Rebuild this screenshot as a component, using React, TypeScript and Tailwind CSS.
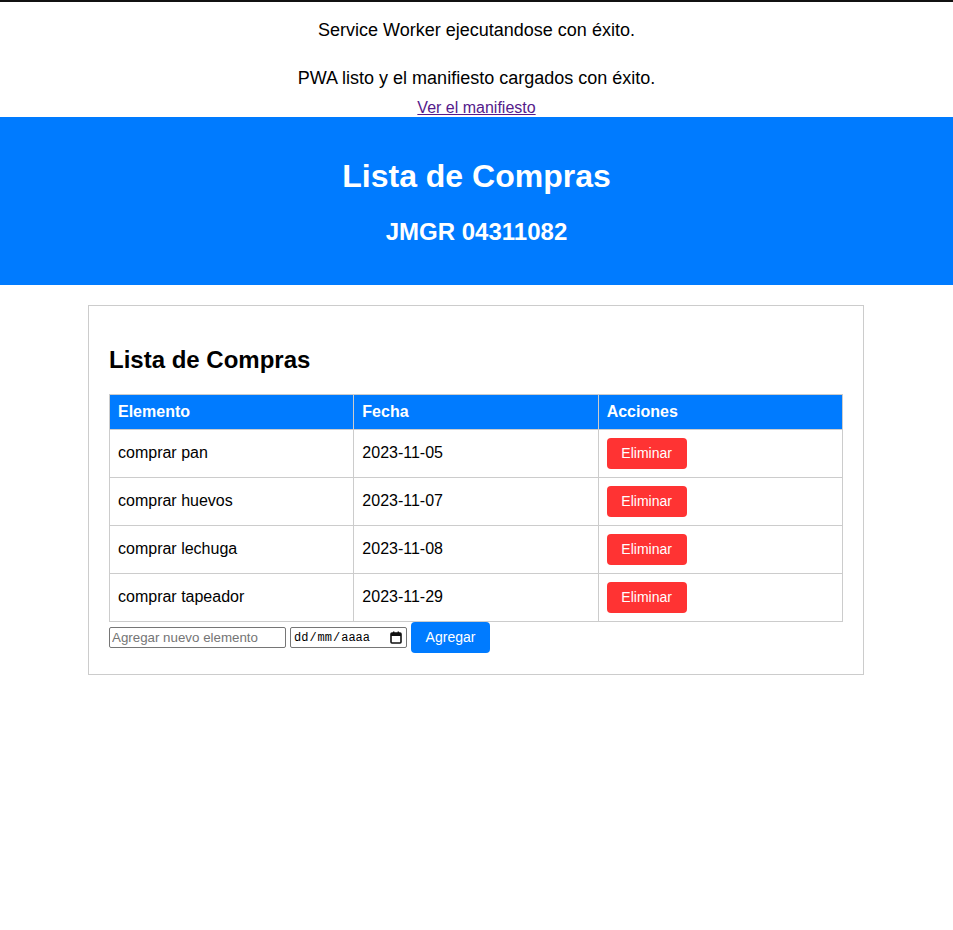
const items = [
  { name: "comprar pan", date: "2023-11-05" },
  { name: "comprar huevos", date: "2023-11-07" },
  { name: "comprar lechuga", date: "2023-11-08" },
  { name: "comprar tapeador", date: "2023-11-29" },
];

function CalendarIcon() {
  return (
    <svg width="12" height="13" viewBox="0 0 12 13" fill="none">
      <rect x="1" y="2" width="10" height="10" rx="1" stroke="#111" strokeWidth="1.6" />
      <rect x="1" y="2" width="10" height="3" fill="#111" />
      <rect x="3" y="0.5" width="1.4" height="2.5" fill="#111" />
      <rect x="7.6" y="0.5" width="1.4" height="2.5" fill="#111" />
    </svg>
  );
}

export default function App() {
  return (
    <div className="min-h-[930px] bg-white text-black border-t-2 border-[#111] font-['Liberation_Sans',Arial,sans-serif]">
      <p className="mt-[18px] text-center text-[18px] leading-[21px]">Service Worker ejecutandose con éxito.</p>
      <p className="mt-[27px] text-center text-[18px] leading-[21px]">PWA listo y el manifiesto cargados con éxito.</p>
      <div className="mt-[9px] text-center text-[16px] leading-[19px]">
        <a href="#" className="text-[#551a8b] underline">Ver el manifiesto</a>
      </div>

      <header className="bg-[#007bff] text-white text-center pt-[41px] pb-[39px]">
        <h1 className="text-[32px] font-bold leading-[37px]">Lista de Compras</h1>
        <h2 className="mt-[23px] text-[24px] font-bold leading-[28px]">JMGR 04311082</h2>
      </header>

      <main className="w-[776px] ml-[88px] mt-[20px] border border-[#ccc] px-[20px] pt-[40px] pb-[21px]">
        <h2 className="text-[24px] font-bold leading-[28px] mb-[20px]">Lista de Compras</h2>
        <table className="w-full table-fixed border-collapse text-[16px]">
          <thead>
            <tr className="bg-[#007bff] text-white h-[35px]">
              <th className="border border-[#ccc] px-[8px] py-0 text-left font-bold leading-[18px]">Elemento</th>
              <th className="border border-[#ccc] px-[8px] py-0 text-left font-bold leading-[18px]">Fecha</th>
              <th className="border border-[#ccc] px-[8px] py-0 text-left font-bold leading-[18px]">Acciones</th>
            </tr>
          </thead>
          <tbody>
            {items.map((it) => (
              <tr key={it.name}>
                <td className="border border-[#ccc] px-[8px] pt-[7px] pb-[9px]">{it.name}</td>
                <td className="border border-[#ccc] px-[8px] pt-[7px] pb-[9px]">{it.date}</td>
                <td className="border border-[#ccc] px-[8px] py-[8px]">
                  <button className="h-[31px] w-[80px] rounded-[4px] bg-[#ff3333] text-white text-[14px]">Eliminar</button>
                </td>
              </tr>
            ))}
          </tbody>
        </table>
        <div className="flex items-center gap-[4px]">
          <input
            type="text"
            placeholder="Agregar nuevo elemento"
            className="w-[177px] h-[21px] border border-[#767676] rounded-[2px] px-[2px] text-[13.33px] placeholder:text-[#757575]"
          />
          <div className="w-[117px] h-[21px] border border-[#767676] rounded-[2px] pl-[3px] pr-[4px] flex items-center justify-between font-['Liberation_Mono',monospace] text-[12px]">
            <span className="flex">
              <span>dd</span>
              <span className="mx-[1px]">/</span>
              <span>mm</span>
              <span className="mx-[1px]">/</span>
              <span>aaaa</span>
            </span>
            <CalendarIcon />
          </div>
          <button className="h-[31px] w-[79px] rounded-[4px] bg-[#007bff] text-white text-[14px]">Agregar</button>
        </div>
      </main>
    </div>
  );
}
